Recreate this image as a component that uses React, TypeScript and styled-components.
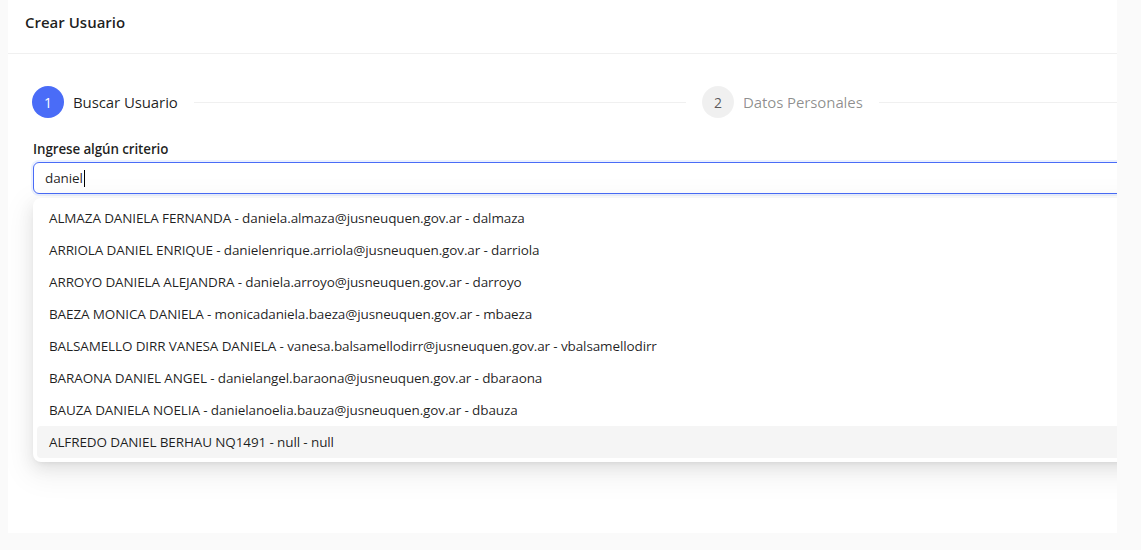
import React from "react";
import styled, { createGlobalStyle } from "styled-components";

const GlobalStyle = createGlobalStyle`
  html, body { margin: 0; padding: 0; background: #fafafa; }
  body { font-family: "Segoe UI", "Open Sans", "Noto Sans", sans-serif; color: rgba(0,0,0,0.88); }
  * { box-sizing: border-box; }
`;

const Page = styled.div`
  padding: 0 24px 0 8px;
  height: 550px;
`;

const Card = styled.div`
  width: 1109px;
  height: 533px;
  background: #fff;
  overflow: hidden;
`;

const CardHead = styled.div`
  height: 54px;
  border-bottom: 1px solid #f0f0f0;
  padding: 0 17px 9px;
  display: flex;
  align-items: center;
  font-size: 15px;
  font-weight: 600;
`;

const CardBody = styled.div`
  width: 1500px;
  padding: 32px 24px 0 24px;
`;

const Steps = styled.div`
  display: flex;
  height: 32px;
`;

const StepItem = styled.div`
  width: 670px;
  display: flex;
  align-items: center;
  flex: none;
`;

const StepIcon = styled.div<{ $active?: boolean }>`
  width: 32px;
  height: 32px;
  border-radius: 50%;
  display: flex;
  align-items: center;
  justify-content: center;
  font-size: 14px;
  background: ${(p) => (p.$active ? "#4a6cf7" : "rgba(0,0,0,0.06)")};
  color: ${(p) => (p.$active ? "#fff" : "rgba(0,0,0,0.65)")};
`;

const StepTitle = styled.div<{ $active?: boolean }>`
  margin-left: 9px;
  font-size: 15px;
  letter-spacing: -0.1px;
  color: ${(p) => (p.$active ? "rgba(0,0,0,0.88)" : "rgba(0,0,0,0.45)")};
`;

const StepTail = styled.div`
  flex: 1;
  height: 1px;
  background: #f0f0f0;
  margin: 0 16px;
`;

const Field = styled.div`
  margin-top: 20px;
  padding-left: 1px;
`;

const Label = styled.div`
  font-size: 13.4px;
  font-weight: 600;
  letter-spacing: -0.1px;
  height: 22px;
  line-height: 22px;
  margin-bottom: 2px;
`;

const InputBox = styled.div`
  height: 32px;
  border: 1px solid #4a6cf7;
  border-radius: 6px;
  box-shadow: 0 0 0 2px rgba(5, 80, 255, 0.08);
  padding: 0 11px;
  display: flex;
  align-items: center;
  font-size: 13.5px;
  letter-spacing: -0.12px;
`;

const Caret = styled.span`
  display: inline-block;
  width: 1px;
  height: 17px;
  background: #000;
  vertical-align: middle;
  margin-left: 1px;
`;

const Dropdown = styled.div`
  margin-top: 4px;
  background: #fff;
  border-radius: 8px;
  padding: 4px;
  box-shadow: 0 6px 16px 0 rgba(0,0,0,0.08), 0 3px 6px -4px rgba(0,0,0,0.12), 0 9px 28px 8px rgba(0,0,0,0.05);
`;

const Option = styled.div<{ $active?: boolean }>`
  height: 32px;
  line-height: 32px;
  padding: 0 12px;
  font-size: 13.5px;
  letter-spacing: -0.12px;
  border-radius: 4px;
  white-space: nowrap;
  background: ${(p) => (p.$active ? "#f5f5f5" : "transparent")};
`;

const options = [
  "ALMAZA DANIELA FERNANDA - daniela.almaza@jusneuquen.gov.ar - dalmaza",
  "ARRIOLA DANIEL ENRIQUE - danielenrique.arriola@jusneuquen.gov.ar - darriola",
  "ARROYO DANIELA ALEJANDRA - daniela.arroyo@jusneuquen.gov.ar - darroyo",
  "BAEZA MONICA DANIELA - monicadaniela.baeza@jusneuquen.gov.ar - mbaeza",
  "BALSAMELLO DIRR VANESA DANIELA - vanesa.balsamellodirr@jusneuquen.gov.ar - vbalsamellodirr",
  "BARAONA DANIEL ANGEL - danielangel.baraona@jusneuquen.gov.ar - dbaraona",
  "BAUZA DANIELA NOELIA - danielanoelia.bauza@jusneuquen.gov.ar - dbauza",
  "ALFREDO DANIEL BERHAU NQ1491 - null - null",
];

export default function App() {
  return (
    <>
      <GlobalStyle />
      <Page>
        <Card>
          <CardHead>Crear Usuario</CardHead>
          <CardBody>
            <Steps>
              <StepItem>
                <StepIcon $active>1</StepIcon>
                <StepTitle $active>Buscar Usuario</StepTitle>
                <StepTail />
              </StepItem>
              <StepItem>
                <StepIcon>2</StepIcon>
                <StepTitle>Datos Personales</StepTitle>
                <StepTail />
              </StepItem>
            </Steps>
            <Field>
              <Label>Ingrese algún criterio</Label>
              <InputBox>
                daniel
                <Caret />
              </InputBox>
              <Dropdown>
                {options.map((o, i) => (
                  <Option key={i} $active={i === options.length - 1}>
                    {o}
                  </Option>
                ))}
              </Dropdown>
            </Field>
          </CardBody>
        </Card>
      </Page>
    </>
  );
}
